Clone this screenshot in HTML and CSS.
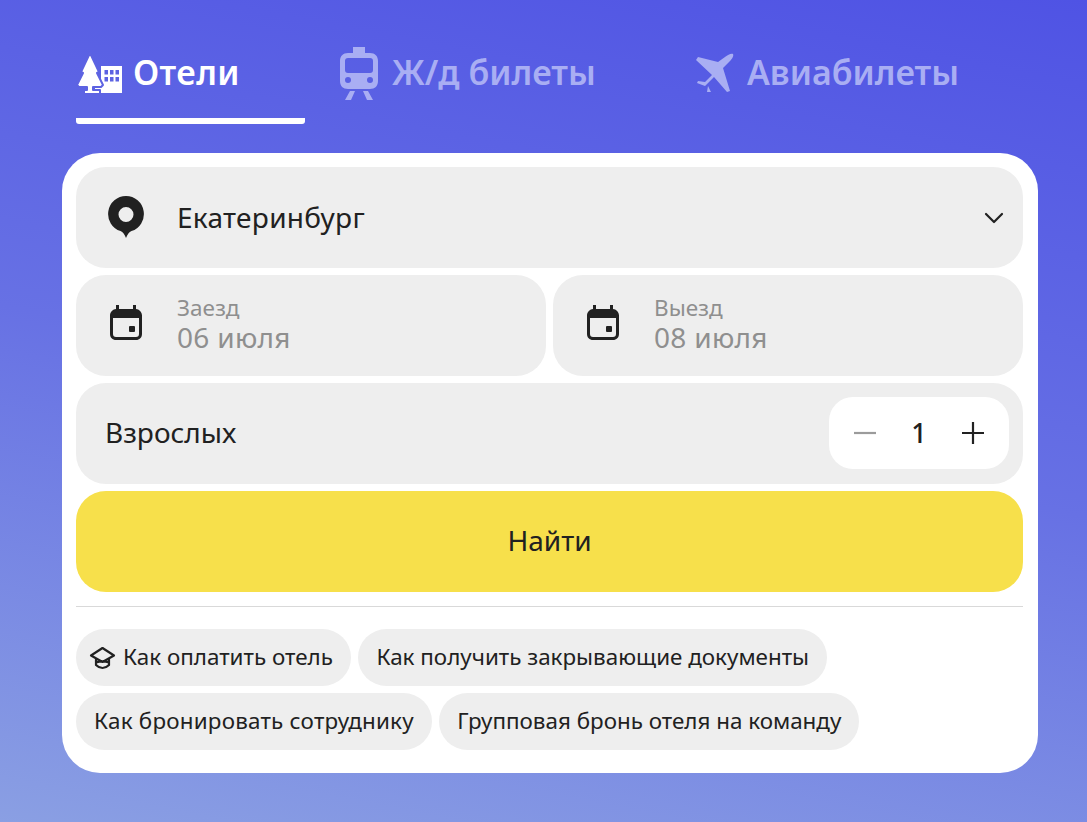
FILE: index.html
```html
<!DOCTYPE html>
<html lang="ru">
<head>
<meta charset="utf-8">
<title>Отели</title>
<link rel="stylesheet" href="styles.css">
</head>
<body>
<main class="page">
  <nav class="tabs">
    <a class="tab tab-hotels active">
      <svg class="tab-icon" width="44" height="42" viewBox="0 0 44 42"><path fill="currentColor" d="M22 13h21v27H16v-6h6z"/><path fill="#5d63e2" d="M25.500 17h3.500v4.500h-3.500zM31 17h3.500v4.500H31zM36.500 17H40v4.500h-3.500zM25.500 24H29v4.500h-3.500zM31 24h3.500v4.500H31zM36.500 24H40v4.500h-3.500z"/><path fill="currentColor" stroke="#5d63e2" stroke-width="2" stroke-linejoin="round" d="M11 0 20 19l-2 1 6 12-2 2H14v3h7v4H5v-4h3v-3H0l-2-2 6-12-2-1z"/></svg>
      <span>Отели</span>
    </a>
    <a class="tab tab-train">
      <svg class="tab-icon" width="40" height="53" viewBox="0 0 40 53"><path fill="currentColor" fill-rule="evenodd" d="M14 0h12v6h5c5 0 8 3 8 8v20c0 5-3 8-8 8H9c-5 0-8-3-8-8V14c0-5 3-8 8-8h5zM9 11a3 3 0 0 0-3 3v9a3 3 0 0 0 3 3h22a3 3 0 0 0 3-3v-9a3 3 0 0 0-3-3zM9 30a3 3 0 1 0 0 6 3 3 0 0 0 0-6zm22 0a3 3 0 1 0 0 6 3 3 0 0 0 0-6z"/><path fill="currentColor" d="M11 44h5l-4 9H6zM24 44h5l5 9h-6z"/></svg>
      <span>Ж/д билеты</span>
    </a>
    <a class="tab tab-avia">
      <svg class="tab-icon" width="40" height="40" viewBox="0 0 40 40"><path fill="currentColor" d="M38 1c1 2-1 5-3 7l-7 7 7 23-3 1-13-15-9 9-8-3 1-2 7 1 7-7L1 7l2-3 20 5 7-5c3-2 6-4 8-3zM13 33l3 6h-4z"/></svg>
      <span>Авиабилеты</span>
    </a>
  </nav>
  <section class="card">
    <button class="field field-city">
      <svg class="pin" width="38" height="44" viewBox="0 0 38 44"><path fill="#212121" fill-rule="evenodd" d="M19 1a18 18 0 0 1 5.500 35.100C22 37 20.500 39.500 19 43c-1.500-3.500-3-6-5.500-6.900A18 18 0 0 1 19 1zm0 11a7.500 7.500 0 1 0 0 15 7.500 7.500 0 0 0 0-15z"/></svg>
      <span class="city">Екатеринбург</span>
      <svg class="chevron" width="20" height="12" viewBox="0 0 20 12"><path fill="none" stroke="#212121" stroke-width="2.200" stroke-linecap="round" stroke-linejoin="round" d="M2 2l8 8 8-8"/></svg>
    </button>
    <div class="dates">
      <div class="field field-date">
        <svg class="cal" width="34" height="36" viewBox="0 0 34 36"><path fill="#212121" fill-rule="evenodd" d="M7 0h3v4h14V0h3v4c3 .300 6 2.800 6 6.500V29c0 3.500-2.500 6-6 6H7c-3.500 0-6-2.500-6-6V10.500C1 6.800 4 4.300 7 4zM4 13v16a3 3 0 0 0 3 3h20a3 3 0 0 0 3-3V13z"/><rect fill="#212121" x="20" y="21" width="6" height="6" rx="1"/></svg>
        <div class="date-text"><span class="date-label">Заезд</span><span class="date-value">06 июля</span></div>
      </div>
      <div class="field field-date">
        <svg class="cal" width="34" height="36" viewBox="0 0 34 36"><path fill="#212121" fill-rule="evenodd" d="M7 0h3v4h14V0h3v4c3 .300 6 2.800 6 6.500V29c0 3.500-2.500 6-6 6H7c-3.500 0-6-2.500-6-6V10.500C1 6.800 4 4.300 7 4zM4 13v16a3 3 0 0 0 3 3h20a3 3 0 0 0 3-3V13z"/><rect fill="#212121" x="20" y="21" width="6" height="6" rx="1"/></svg>
        <div class="date-text"><span class="date-label">Выезд</span><span class="date-value">08 июля</span></div>
      </div>
    </div>
    <div class="field field-adults">
      <span class="adults-label">Взрослых</span>
      <div class="stepper">
        <svg width="24" height="24" viewBox="0 0 24 24"><path stroke="#9b9b9b" stroke-width="2.200" d="M1 12h22"/></svg>
        <span class="count">1</span>
        <svg width="24" height="24" viewBox="0 0 24 24"><path stroke="#212121" stroke-width="2.200" d="M1 12h22M12 1v22"/></svg>
      </div>
    </div>
    <button class="search">Найти</button>
    <hr class="divider">
    <div class="chips">
      <a class="chip">
        <svg class="chip-icon" width="27" height="24" viewBox="0 0 27 24"><path fill="none" stroke="#212121" stroke-width="2.200" stroke-linejoin="round" d="M13.500 2 2 9.500l11.500 6.500L25 9.500zM7 13v6c2 2 4 3 6.500 3s4.500-1 6.500-3v-6M7 16.500c4-1.500 9-1.500 13 0"/></svg>
        <span>Как оплатить отель</span>
      </a>
      <a class="chip"><span>Как получить закрывающие документы</span></a>
      <a class="chip chip-wide"><span>Как бронировать сотруднику</span></a>
      <a class="chip"><span>Групповая бронь отеля на команду</span></a>
    </div>
  </section>
</main>
</body>
</html>
```
FILE: styles.css
```css
* { box-sizing: border-box; }
html, body { margin: 0; height: 100%; }
body {
  background: linear-gradient(191deg, #4f53e4 0%, #6771e4 50%, #8a9fe3 100%);
  font-family: "Noto Sans", "Liberation Sans", sans-serif;
  color: #212121;
  overflow: hidden;
}
.page { padding: 48px 49px 0 62px; }
.tabs { display: flex; gap: 30px; padding-left: 14px; height: 105px; }
.tab {
  display: flex;
  align-items: flex-start;
  gap: 12px;
  padding: 0 4px;
  height: 76px;
  font-size: 34px;
  font-weight: 600;
  line-height: 48px;
  color: #a9aef3;
  white-space: nowrap;
}
.tab-hotels {
  width: 229px;
  padding-left: 3px;
  gap: 10px;
  color: #fff;
  letter-spacing: 0.4px;
  border-bottom: 6px solid #fff;
  border-radius: 3px;
}
.tab-train { width: 326px; gap: 13px; }
.tab-avia { width: 330px; }
.tab-icon { flex: none; margin-top: 5px; overflow: visible; }
.tab-train .tab-icon { margin-top: -1px; }
.card {
  display: flex;
  flex-direction: column;
  gap: 7px;
  background: #fff;
  border-radius: 38px;
  padding: 14px 15px 22px 14px;
  width: 976px;
  height: 620px;
}
.field {
  display: flex;
  align-items: center;
  height: 101px;
  background: #eee;
  border: 0;
  border-radius: 30px;
  padding: 0 30px;
  font-family: inherit;
  color: inherit;
}
.field-city { text-align: left; padding-left: 31px; padding-right: 19px; }
.pin { flex: none; margin-right: 32px; margin-top: -2px; }
.city { flex: 1; font-size: 28px; letter-spacing: 0.3px; padding-bottom: 2px; }
.chevron { flex: none; }
.dates { display: flex; gap: 7px; }
.field-date { flex: 1; gap: 34px; padding-left: 33px; }
.cal { flex: none; margin-top: -6px; }
.date-text { display: flex; flex-direction: column; margin-top: -4px; color: #8f8f8f; }
.date-label { font-size: 22.500px; line-height: 27px; }
.date-value { font-size: 28px; line-height: 33px; letter-spacing: 0.300px; }
.field-adults { justify-content: space-between; padding-left: 29px; padding-right: 14px; }
.adults-label { font-size: 28px; padding-bottom: 4px; }
.stepper {
  display: flex;
  align-items: center;
  justify-content: space-between;
  width: 180px;
  height: 72px;
  margin-top: -1px;
  padding: 0 24px;
  background: #fff;
  border-radius: 24px;
}
.count { font-size: 27px; font-weight: 500; padding-bottom: 2px; }
.search {
  height: 101px;
  padding-bottom: 4px;
  background: #f7e04b;
  border: 0;
  border-radius: 30px;
  font-family: inherit;
  font-size: 28px;
  color: #212121;
}
.divider { width: 100%; margin: 7px 0 15px; border: 0; border-top: 1px solid #d9d9d9; }
.chips { display: flex; flex-wrap: wrap; gap: 7px 7.500px; }
.chip {
  display: flex;
  align-items: center;
  height: 57px;
  padding: 0 18px 3px;
  background: #eee;
  border-radius: 29px;
  font-size: 22.400px;
  white-space: nowrap;
}
.chip-wide { letter-spacing: 0.220px; }
.chip:first-child { padding-left: 13px; padding-bottom: 0; gap: 7px; }
.chip:first-child span { padding-bottom: 3px; }
.chip-icon { flex: none; }
```
